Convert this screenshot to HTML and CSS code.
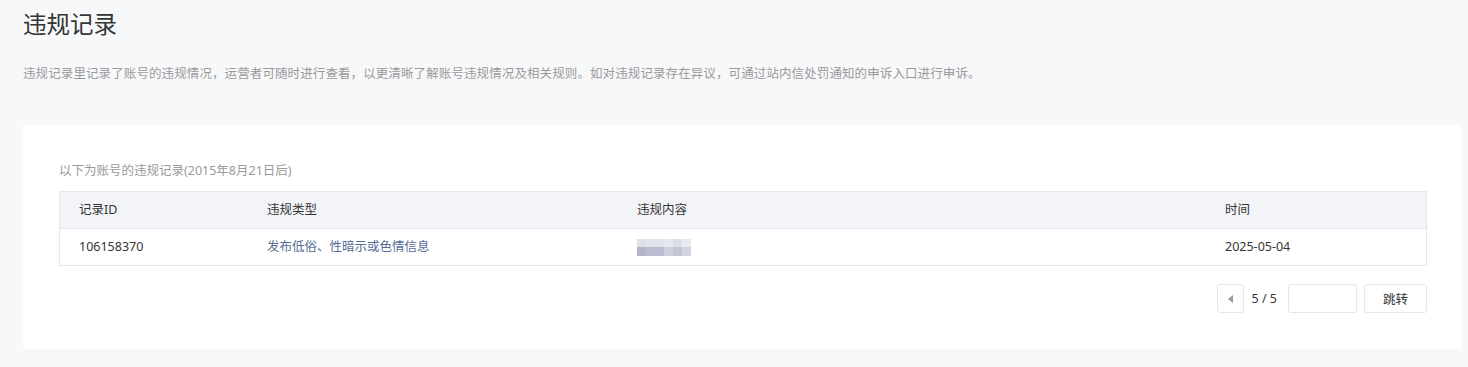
FILE: index.html
```html
<!DOCTYPE html>
<html lang="zh-CN">
<head>
<meta charset="utf-8">
<title>违规记录</title>
<link rel="stylesheet" href="styles.css">
</head>
<body>
<div class="page">
  <h1 class="title">违规记录</h1>
  <p class="desc">违规记录里记录了账号的违规情况，运营者可随时进行查看，以更清晰了解账号违规情况及相关规则。如对违规记录存在异议，可通过站内信处罚通知的申诉入口进行申诉。</p>
  <div class="card">
    <p class="sub">以下为账号的违规记录(2015年8月21日后)</p>
    <div class="table">
      <div class="row head">
        <div class="cell">记录ID</div>
        <div class="cell">违规类型</div>
        <div class="cell">违规内容</div>
        <div class="cell">时间</div>
      </div>
      <div class="row">
        <div class="cell">106158370</div>
        <div class="cell link">发布低俗、性暗示或色情信息</div>
        <div class="cell">
          <svg class="mosaic" width="54" height="17" viewBox="0 0 54 17">
            <rect x="0" y="0" width="9" height="8" fill="#dfe0e8"/>
            <rect x="9" y="0" width="18" height="8" fill="#e2e3eb"/>
            <rect x="27" y="0" width="9" height="8" fill="#e6e8ee"/>
            <rect x="36" y="0" width="9" height="8" fill="#dddfe7"/>
            <rect x="45" y="0" width="9" height="8" fill="#e8eaf0"/>
            <rect x="0" y="8" width="9" height="9" fill="#b3b6c8"/>
            <rect x="9" y="8" width="18" height="9" fill="#babed0"/>
            <rect x="27" y="8" width="9" height="9" fill="#ccd1de"/>
            <rect x="36" y="8" width="9" height="9" fill="#c3c5d3"/>
            <rect x="45" y="8" width="9" height="9" fill="#d0d5e1"/>
          </svg>
        </div>
        <div class="cell">2025-05-04</div>
      </div>
    </div>
    <div class="pager">
      <button class="btn prev" aria-label="上一页"><span class="tri"></span></button>
      <span class="num">5 / 5</span>
      <input class="jump-input" type="text">
      <button class="btn jump">跳转</button>
    </div>
  </div>
</div>
</body>
</html>
```

FILE: styles.css
```css
html, body {
  margin: 0;
  padding: 0;
  background: #f7f8fa;
}
body {
  font-family: "Noto Sans", "Noto Sans CJK SC", sans-serif;
  color: #353535;
}
.page {
  padding: 8px 6px 18px 23px;
}
.title {
  margin: 0;
  font-size: 23.5px;
  font-weight: 400;
  line-height: 32px;
  color: #353535;
}
.desc {
  margin: 24px 0 0;
  font-size: 12.5px;
  line-height: 20px;
  letter-spacing: 0.1px;
  color: #9a9a9a;
}
.card {
  margin-top: 41px;
  background: #fff;
  border-radius: 2px;
  padding: 36px 35px 36px 36px;
}
.sub {
  margin: 0;
  font-size: 12.5px;
  line-height: 20px;
  color: #9a9a9a;
}
.table {
  margin-top: 10px;
  border: 1px solid #e4e6eb;
}
.row {
  display: grid;
  grid-template-columns: 188px 370px 588px 1fr;
  height: 36px;
  align-items: center;
  font-size: 12.5px;
  color: #353535;
}
.row.head {
  background: #f3f4f8;
  border-bottom: 1px solid #e4e6eb;
}
.cell {
  padding-left: 19px;
  line-height: 20px;
  display: flex;
  align-items: center;
}
.cell.link {
  color: #576b95;
}
.mosaic {
  display: block;
}
.pager {
  margin-top: 18px;
  display: flex;
  justify-content: flex-end;
  align-items: center;
  height: 29px;
}
.btn {
  height: 29px;
  box-sizing: border-box;
  border: 1px solid #e4e6eb;
  border-radius: 3px;
  background: #fff;
  font-family: inherit;
  font-size: 12.5px;
  color: #353535;
  padding: 0;
  cursor: pointer;
}
.prev {
  width: 27px;
  display: flex;
  align-items: center;
  justify-content: center;
}
.tri {
  width: 0;
  height: 0;
  border-top: 4px solid transparent;
  border-bottom: 4px solid transparent;
  border-right: 5px solid #999;
}
.num {
  margin-left: 8px;
  font-size: 12.5px;
  color: #353535;
}
.jump-input {
  margin-left: 11px;
  width: 69px;
  height: 29px;
  box-sizing: border-box;
  border: 1px solid #e4e6eb;
  border-radius: 3px;
  outline: none;
  padding: 0 6px;
}
.jump {
  margin-left: 7px;
  width: 63px;
}
```
